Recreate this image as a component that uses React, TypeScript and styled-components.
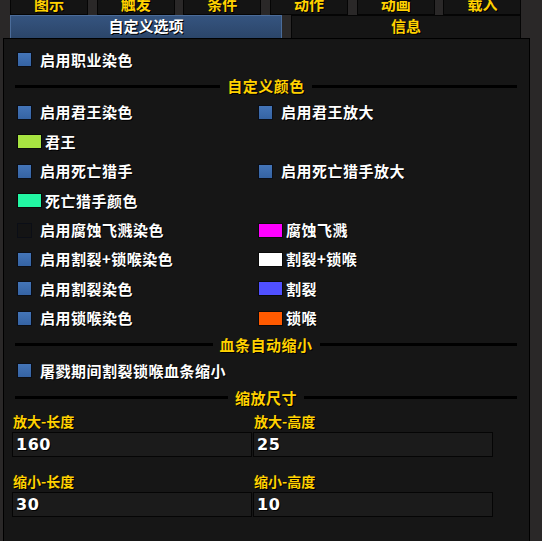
import React from "react";
import styled, { createGlobalStyle } from "styled-components";

const GlobalStyle = createGlobalStyle`
	html, body {
		margin: 0;
		padding: 0;
		background: #2a2828;
		overflow: hidden;
	}
	body {
		font-family: "Noto Sans CJK SC", "Noto Sans", sans-serif;
	}
`;

const GOLD = "#ffd100";

const Page = styled.div`
	width: 542px;
	height: 541px;
	overflow: hidden;
	background: #2a2828;
`;

const TopTabs = styled.div`
	display: flex;
	gap: 8.7px;
	padding-left: 10px;
	margin-top: -8px;
	height: 23px;
`;

const TopTab = styled.div`
	width: 78px;
	box-sizing: border-box;
	background: #141414;
	border: 1px solid #050505;
	border-top: none;
	color: ${GOLD};
	font-size: 15px;
	font-weight: 700;
	display: flex;
	align-items: center;
	justify-content: center;
	text-shadow: 1px 1px 0 #000;
`;

const SubTabs = styled.div`
	display: flex;
	gap: 9px;
	padding-left: 10px;
	height: 23px;
`;

const SubTab = styled.div<{ $active?: boolean; $w: number }>`
	width: ${(p) => p.$w}px;
	box-sizing: border-box;
	display: flex;
	align-items: center;
	justify-content: center;
	padding-bottom: 3px;
	font-size: 15px;
	font-weight: 700;
	text-shadow: 1px 1px 0 #000;
	color: ${(p) => (p.$active ? "#fff" : GOLD)};
	background: ${(p) =>
		p.$active ? "linear-gradient(#35547f, #2b4569)" : "#151515"};
	border: 1px solid ${(p) => (p.$active ? "#4b6c99" : "#050505")};
	border-bottom: none;
`;

const Panel = styled.div`
	margin-left: 3px;
	width: 527px;
	height: 510px;
	box-sizing: border-box;
	background: #161616;
	border: 1px solid #000;
	border-bottom: none;
	padding: 5px 12px 0 11px;
	display: flex;
	flex-direction: column;
`;

const Row = styled.div<{ $h?: number }>`
	display: grid;
	grid-template-columns: 241px 1fr;
	align-items: center;
	height: ${(p) => p.$h ?? 29.4}px;
	padding-left: 2px;
`;

const Item = styled.div<{ $swatch?: boolean }>`
	display: flex;
	align-items: center;
	gap: ${(p) => (p.$swatch ? 3 : 8)}px;
	color: #fff;
	font-size: 15px;
	font-weight: 700;
	letter-spacing: 0.5px;
	text-shadow: 1px 1px 0 #000;
	white-space: nowrap;
`;

const Check = styled.span<{ $on: boolean }>`
	width: 15px;
	height: 15px;
	box-sizing: border-box;
	border: 1px solid #0b0e16;
	background: ${(p) =>
		p.$on ? "linear-gradient(#4475b8, #3563a3)" : "#141414"};
	flex-shrink: 0;
	margin-top: 1px;
`;

const Swatch = styled.span<{ $color: string }>`
	width: 25px;
	height: 15px;
	box-sizing: border-box;
	border: 1px solid #0a0a0a;
	background: ${(p) => p.$color};
	flex-shrink: 0;
	margin-top: 1px;
`;

const Heading = styled.div<{ $h: number }>`
	display: flex;
	align-items: center;
	gap: 7px;
	height: ${(p) => p.$h}px;
	color: ${GOLD};
	font-size: 15px;
	font-weight: 700;
	letter-spacing: 0.5px;
	text-shadow: 1px 1px 0 #000;
	white-space: nowrap;

	&::before,
	&::after {
		content: "";
		flex: 1;
		height: 3px;
		background: #000;
		margin-top: 1px;
	}
`;

const Fields = styled.div<{ $top: number }>`
	display: grid;
	grid-template-columns: 240px 240px;
	column-gap: 1px;
	margin-left: -3px;
	margin-top: ${(p) => p.$top}px;
`;

const Field = styled.div`
	display: flex;
	flex-direction: column;
`;

const FieldLabel = styled.div`
	height: 22px;
	line-height: 23px;
	padding-left: 1px;
	color: ${GOLD};
	font-size: 14px;
	font-weight: 700;
	text-shadow: 1px 1px 0 #000;
`;

const Input = styled.div`
	height: 25px;
	box-sizing: border-box;
	border: 1px solid #050505;
	background: #1b1b1b;
	color: #fff;
	font-family: "DejaVu Sans", sans-serif;
	font-size: 16px;
	font-weight: 700;
	letter-spacing: 0.5px;
	padding-left: 3px;
	display: flex;
	align-items: center;
	text-shadow: 1px 1px 0 #000;
`;

type Cell =
	| { kind: "check"; on: boolean; text: string }
	| { kind: "swatch"; color: string; text: string };

const CellView = ({ cell }: { cell?: Cell }) => {
	if (!cell) return <span />;
	if (cell.kind === "check")
		return (
			<Item>
				<Check $on={cell.on} />
				{cell.text}
			</Item>
		);
	return (
		<Item $swatch>
			<Swatch $color={cell.color} />
			{cell.text}
		</Item>
	);
};

const colorRows: Cell[][] = [
	[
		{ kind: "check", on: true, text: "启用君王染色" },
		{ kind: "check", on: true, text: "启用君王放大" },
	],
	[{ kind: "swatch", color: "#a7e341", text: "君王" }],
	[
		{ kind: "check", on: true, text: "启用死亡猎手" },
		{ kind: "check", on: true, text: "启用死亡猎手放大" },
	],
	[{ kind: "swatch", color: "#22f7a3", text: "死亡猎手颜色" }],
	[
		{ kind: "check", on: false, text: "启用腐蚀飞溅染色" },
		{ kind: "swatch", color: "#ff00ff", text: "腐蚀飞溅" },
	],
	[
		{ kind: "check", on: true, text: "启用割裂+锁喉染色" },
		{ kind: "swatch", color: "#ffffff", text: "割裂+锁喉" },
	],
	[
		{ kind: "check", on: true, text: "启用割裂染色" },
		{ kind: "swatch", color: "#5050ff", text: "割裂" },
	],
	[
		{ kind: "check", on: true, text: "启用锁喉染色" },
		{ kind: "swatch", color: "#ff5a00", text: "锁喉" },
	],
];

const topTabs = ["图示", "触发", "条件", "动作", "动画", "载入"];

const App: React.FC = () => {
	return (
		<Page>
			<GlobalStyle />
			<TopTabs>
				{topTabs.map((t) => (
					<TopTab key={t}>{t}</TopTab>
				))}
			</TopTabs>
			<SubTabs>
				<SubTab $active $w={272}>
					自定义选项
				</SubTab>
				<SubTab $w={230}>信息</SubTab>
			</SubTabs>
			<Panel>
				<Row $h={30}>
					<CellView cell={{ kind: "check", on: true, text: "启用职业染色" }} />
				</Row>
				<Heading $h={23.3}>自定义颜色</Heading>
				{colorRows.map((r, i) => (
					<Row key={i}>
						<CellView cell={r[0]} />
						<CellView cell={r[1]} />
					</Row>
				))}
				<Heading $h={24}>血条自动缩小</Heading>
				<Row $h={28}>
					<CellView
						cell={{ kind: "check", on: true, text: "屠戮期间割裂锁喉血条缩小" }}
					/>
				</Row>
				<Heading $h={26}>缩放尺寸</Heading>
				<Fields $top={0}>
					<Field>
						<FieldLabel>放大-长度</FieldLabel>
						<Input>160</Input>
					</Field>
					<Field>
						<FieldLabel>放大-高度</FieldLabel>
						<Input>25</Input>
					</Field>
				</Fields>
				<Fields $top={13}>
					<Field>
						<FieldLabel>缩小-长度</FieldLabel>
						<Input>30</Input>
					</Field>
					<Field>
						<FieldLabel>缩小-高度</FieldLabel>
						<Input>10</Input>
					</Field>
				</Fields>
			</Panel>
		</Page>
	);
};

export default App;
